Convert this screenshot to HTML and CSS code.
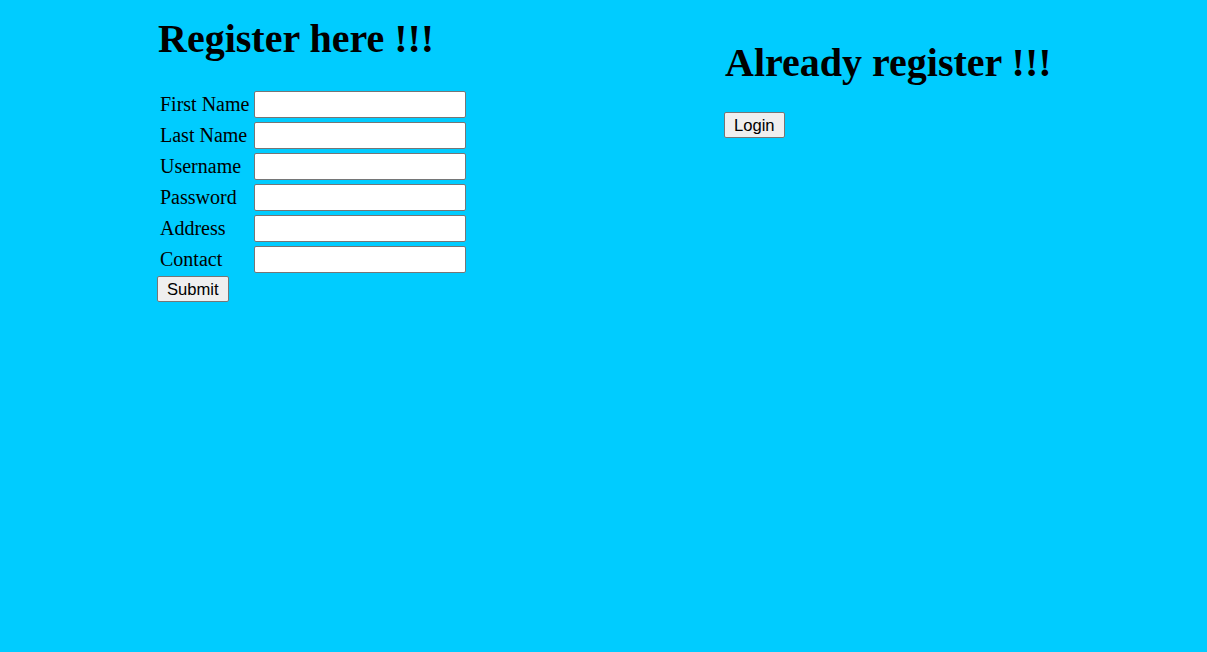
FILE: index.html
```html
<!DOCTYPE html>
<html>
<head>
<meta charset="utf-8">
<title>Register</title>
<link rel="stylesheet" href="styles.css">
</head>
<body>
<div class="page">
  <section class="col col-left">
    <h1 class="title title-left">Register here !!!</h1>
    <form class="reg-form">
      <table class="reg-table">
        <tr><td class="lbl">First Name</td><td><input class="field" type="text"></td></tr>
        <tr><td class="lbl">Last Name</td><td><input class="field" type="text"></td></tr>
        <tr><td class="lbl">Username</td><td><input class="field" type="text"></td></tr>
        <tr><td class="lbl">Password</td><td><input class="field" type="password"></td></tr>
        <tr><td class="lbl">Address</td><td><input class="field" type="text"></td></tr>
        <tr><td class="lbl">Contact</td><td><input class="field" type="text"></td></tr>
      </table>
      <button class="btn" type="button">Submit</button>
    </form>
  </section>
  <section class="col col-right">
    <h1 class="title title-right">Already register !!!</h1>
    <button class="btn" type="button">Login</button>
  </section>
</div>
</body>
</html>
```

FILE: styles.css
```css
html, body {
  margin: 0;
  padding: 0;
}
body {
  background: #00ccff;
  font-family: "Liberation Serif", "Times New Roman", serif;
  font-size: 20px;
  color: #000;
  min-height: 652px;
}
.page {
  display: flex;
  align-items: flex-start;
}
.col-left {
  margin-left: 157px;
  width: 567px;
}
.col-right {
  flex: 1;
}
.title {
  font-size: 40px;
  font-weight: bold;
  line-height: 44px;
  margin: 0 0 27px 1px;
}
.title-left {
  margin-top: 17px;
}
.title-right {
  margin-top: 41px;
}
.reg-form {
  margin: 0;
}
.reg-table {
  border-spacing: 2px;
  border-collapse: separate;
  margin-top: 1px;
  margin-left: 0;
}
.reg-table td {
  padding: 1px;
  vertical-align: middle;
}
.reg-table td.lbl {
  padding-right: 2px;
  white-space: nowrap;
}
.field {
  box-sizing: border-box;
  width: 212px;
  height: 27px;
  margin: 0;
  padding: 1px 2px;
  border: 1px solid #767676;
  border-radius: 2px;
  background: #fff;
  display: block;
  font-size: 13px;
}
.btn {
  font-family: "Liberation Sans", Arial, sans-serif;
  font-size: 16.6px;
  line-height: 19px;
  padding: 3px 9px 2px;
  margin: 0;
  border: 1px solid #767676;
  border-radius: 2px;
  background: #efefef;
  color: #000;
  display: block;
}
```
